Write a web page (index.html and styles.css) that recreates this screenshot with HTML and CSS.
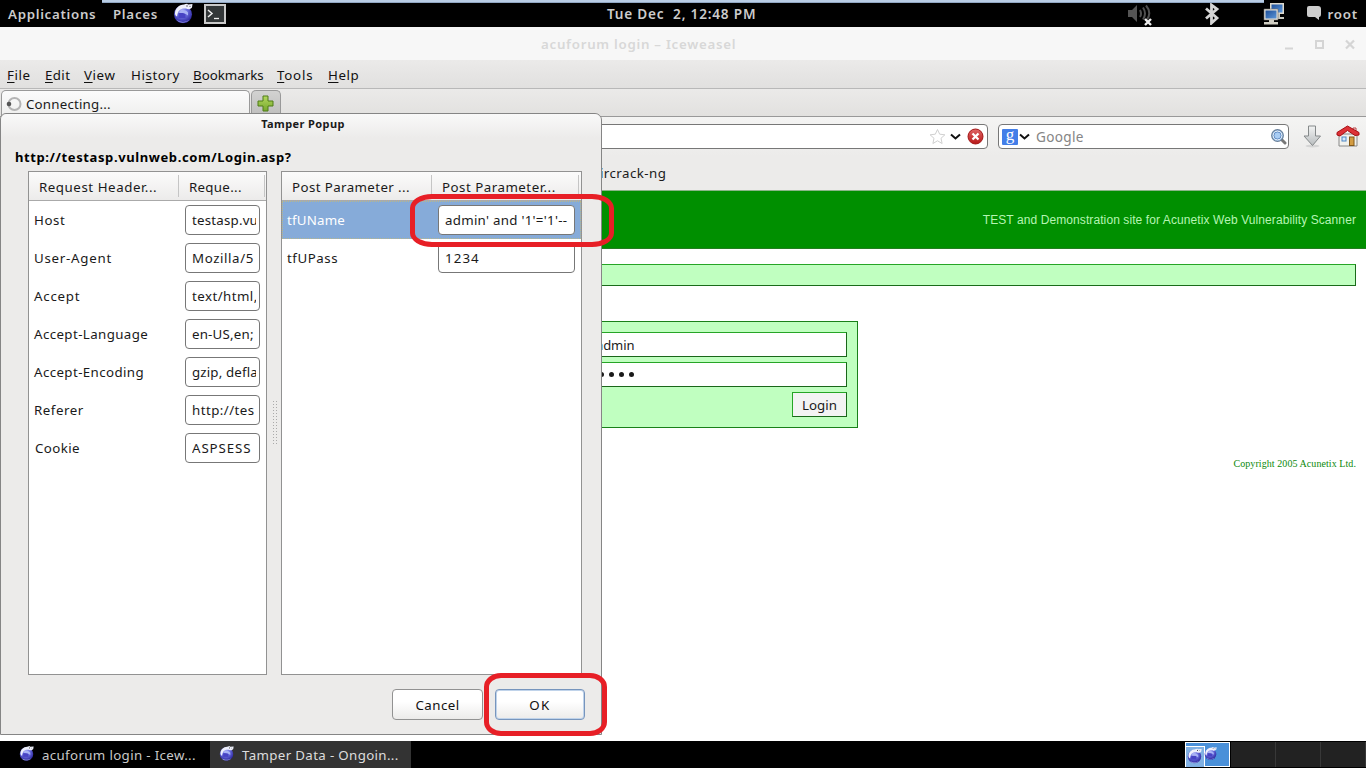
FILE: index.html
```html
<!DOCTYPE html>
<html lang="en">
<head>
<meta charset="utf-8">
<title>acuforum login - Iceweasel</title>
<link rel="stylesheet" href="styles.css">
</head>
<body>
<svg class="defs" width="0" height="0">
  <defs>
    <radialGradient id="globe" cx=".45" cy=".35" r=".65"><stop offset="0" stop-color="#c3cbfa"/><stop offset=".4" stop-color="#6f74e4"/><stop offset="1" stop-color="#2a239c"/></radialGradient>
    <linearGradient id="plus" x2="0" y2="1"><stop offset="0" stop-color="#b4d860"/><stop offset="1" stop-color="#75a72c"/></linearGradient>
    <linearGradient id="screen" x2="1" y2="1"><stop offset="0" stop-color="#1e4f99"/><stop offset="1" stop-color="#5c96d8"/></linearGradient>
    <linearGradient id="stop" x2="0" y2="1"><stop offset="0" stop-color="#e06666"/><stop offset="1" stop-color="#b81818"/></linearGradient>
    <linearGradient id="arrow" x2="0" y2="1"><stop offset="0" stop-color="#f2f3f3"/><stop offset="1" stop-color="#b9bdbf"/></linearGradient>
    <symbol id="weasel" viewBox="0 0 20 20">
      <circle cx="10" cy="10.800" r="9" fill="url(#globe)"/>
      <path d="M4 16.500c3 2.500 9 2.500 12 0-1.500 3-10.500 3.500-12 0Z" fill="#b9c3f2"/>
      <path d="M5.500 9.500h7v5h-7Z" fill="#4743c4"/>
      <path d="M6 9c2-3 7-3 9 0v3c-2-2-6-3-9-3Z" fill="#a8b2f4"/>
      <path d="M2 10C2 5 6 1 11 1l3-1 1 1 4.500-.5-.5 3.500c-1.500 2-4 2.300-6 1C8 4.500 5 6 4 13c-1-.500-2-1.500-2-3Z" fill="#eef0fb"/>
      <circle cx="14" cy="2.500" r=".7" fill="#444"/><circle cx="17" cy="2.800" r=".6" fill="#555"/>
    </symbol>
  </defs>
</svg>
<div class="desktop">
  <header class="panel">
    <span class="p-apps">Applications</span>
    <span class="p-places">Places</span>
    <svg class="p-globe" width="20" height="21" viewBox="0 0 20 20"><use href="#weasel"/></svg>
    <svg class="p-term" width="22" height="20"><rect x="1" y="1" width="20" height="18" fill="#333738" stroke="#c9c9c9" stroke-width="2"/><path d="M4 6l4 3.500L4 13" fill="none" stroke="#eee" stroke-width="1.500"/><path d="M10 14.500h5" stroke="#eee" stroke-width="1.300"/></svg>
    <span class="p-clock">Tue Dec&nbsp; 2, 12:48 PM</span>
    <div class="tray">
      <svg width="26" height="24"><path d="M1 8h4l5-5v17l-5-5H1Z" fill="#555"/><path d="M13 8q2 4 0 7M16 5.500q4 6 0 12M19 3.500q6 7 1 14" fill="none" stroke="#505050" stroke-width="2"/><path d="M18 17l6 6m0-6l-6 6" stroke="#eee" stroke-width="2.400"/></svg>
      <svg width="16" height="22"><path d="M2 5.500l11 9.500-5.500 5V2L13 6 2 15.500" fill="none" stroke="#d5d5d5" stroke-width="2.800"/></svg>
      <svg width="23" height="24"><path d="M7 1h14v11H7Z" fill="#ddd9cd"/><path d="M8.500 2.500h11v8h-11Z" fill="url(#screen)"/><path d="M12 12h5v3h4v2H10" fill="#c9c9bf"/><path d="M1 7h14v11H1Z" fill="#e5e2d8" stroke="#666" stroke-width=".6"/><path d="M2.500 8.500h11v8h-11Z" fill="url(#screen)"/><path d="M6 18h5v2h4v2.500H1V20h5Z" fill="#d0cec3"/></svg>
      <svg width="16" height="16"><path d="M3 1h9q3 0 3 3v5q0 3-2 3v3l-4-3H3q-2 0-2-2V3q0-2 2-2Z" fill="#ccc"/></svg>
      <span>root</span>
    </div>
    <i class="strip"></i>
  </header>

  <div class="titlebar"><span>acuforum login – Iceweasel</span>
    <svg width="76" height="16"><path d="M1 12.500h8" stroke="#d5d5d5" stroke-width="2"/><rect x="32" y="5" width="7" height="7" fill="none" stroke="#d5d5d5" stroke-width="2"/><path d="M62 4.500l8 8m0-8l-8 8" stroke="#d5d5d5" stroke-width="2.300"/></svg>
  </div>

  <nav class="menubar">
    <span class="m1"><u>F</u>ile</span><span class="m2"><u>E</u>dit</span><span class="m3"><u>V</u>iew</span><span class="m4">Hi<u>s</u>tory</span><span class="m5"><u>B</u>ookmarks</span><span class="m6"><u>T</u>ools</span><span class="m7"><u>H</u>elp</span>
  </nav>

  <div class="tabbar">
    <div class="tab"><svg width="16" height="16"><circle cx="8.500" cy="8" r="6" fill="none" stroke="#b4b4b4" stroke-width="2"/><circle cx="3" cy="8" r="2.300" fill="#555"/></svg><span>Connecting...</span></div>
    <div class="newtab"><svg width="17" height="17"><path d="M6 1h5v5h5v5h-5v5H6v-5H1V6h5Z" fill="url(#plus)" stroke="#4e7d16"/></svg></div>
  </div>

  <div class="navbar">
    <div class="urlbar">
      <svg width="17" height="17"><path d="M8.500 1.500l2.200 4.700 5.200.6-3.900 3.500 1.100 5.200-4.600-2.700-4.600 2.700 1.100-5.200-3.900-3.500 5.200-.6Z" fill="#fff" stroke="#d0d0d0"/></svg>
      <svg class="chev" width="11" height="8"><path d="M1 1.500l4.500 4 4.500-4" fill="none" stroke="#111" stroke-width="2"/></svg>
      <svg width="17" height="17"><circle cx="8.500" cy="8.500" r="7.500" fill="url(#stop)" stroke="#a31616"/><path d="M5.500 5.500l6 6m0-6l-6 6" stroke="#fff" stroke-width="2.300"/></svg>
    </div>
    <div class="search">
      <span class="g">g</span>
      <svg width="11" height="8"><path d="M1 1.500l4.500 4 4.500-4" fill="none" stroke="#111" stroke-width="2"/></svg>
      <span class="ph">Google</span>
      <svg width="17" height="17"><path d="M11 11l4 4" stroke="#777" stroke-width="3" stroke-linecap="round"/><circle cx="7.500" cy="7.500" r="5.800" fill="#a9cdf2" stroke="#687f99" stroke-width="1.200"/><circle cx="7.500" cy="7.500" r="4.200" fill="#a9cdf4" stroke="#fff" stroke-width="1"/><circle cx="7.500" cy="7.500" r="3.600" fill="none" stroke="#4b7ab8" stroke-width=".8"/></svg>
    </div>
    <svg class="down" width="19" height="23"><ellipse cx="9.500" cy="21" rx="7" ry="1.500" fill="#d5d5d5"/><path d="M5.500 1h7v10H17.500L9.500 20.500 1 11h4.500Z" fill="url(#arrow)" stroke="#85898a"/></svg>
    <svg class="home" width="24" height="23"><path d="M3 9h18v12H3Z" fill="#f1f1ed" stroke="#888"/><path d="M17 3h3v5h-3Z" fill="#eee" stroke="#b44"/><path d="M1 10V7.500L11.500 1 23 7.500V10L19 10.500 11.500 5.500 4 11Z" fill="#dd3237" stroke="#a80f14"/><rect x="6" y="12" width="4" height="4" fill="#d6e9fb" stroke="#4e87c4"/><rect x="13.500" y="12" width="4.500" height="8.500" fill="#d39c42" stroke="#80581b"/></svg>
  </div>
  <div class="bookmarks"><span>Aircrack-ng</span></div>

  <main class="site">
    <div class="banner">TEST and Demonstration site for Acunetix Web Vulnerability Scanner</div>
    <div class="sitemenu"></div>
    <div class="login">
      <div class="in">admin</div>
      <div class="in pw"><i></i><i></i><i></i><i></i></div>
      <div class="btn">Login</div>
    </div>
    <div class="copy">Copyright 2005 Acunetix Ltd.</div>
  </main>

  <footer class="taskbar">
    <div class="task"><svg width="15" height="15" viewBox="0 0 20 20"><use href="#weasel"/></svg><span>acuforum login - Icew...</span></div>
    <div class="task active"><svg width="15" height="15" viewBox="0 0 20 20"><use href="#weasel"/></svg><span>Tamper Data - Ongoin...</span></div>
    <div class="pager">
      <div class="ws on"><div class="mini"><svg width="15" height="16" viewBox="0 0 20 20"><use href="#weasel"/></svg></div><svg class="second" width="13" height="15" viewBox="0 0 20 20"><use href="#weasel"/></svg></div>
      <div class="ws"></div><div class="ws"></div><div class="ws"></div>
    </div>
  </footer>

  <section class="popup">
    <div class="ptitle">Tamper Popup</div>
    <div class="purl">http://testasp.vulnweb.com/Login.asp?</div>
    <div class="grids">
      <div class="grid left">
        <div class="head"><span class="h1">Request Header...</span><span class="h2">Reque...</span></div>
        <div class="row"><span class="t1">Host</span><div class="field"><b class="f1">testasp.vu</b></div></div>
        <div class="row"><span class="t2">User-Agent</span><div class="field"><b class="f2">Mozilla/5</b></div></div>
        <div class="row"><span class="t3">Accept</span><div class="field"><b class="f3">text/html,</b></div></div>
        <div class="row"><span class="t4">Accept-Language</span><div class="field"><b class="f4">en-US,en;</b></div></div>
        <div class="row"><span class="t5">Accept-Encoding</span><div class="field"><b class="f5">gzip, defla</b></div></div>
        <div class="row"><span class="t6">Referer</span><div class="field"><b class="f6">http://tes</b></div></div>
        <div class="row"><span class="t7">Cookie</span><div class="field"><b class="f7">ASPSESS</b></div></div>
      </div>
      <div class="splitter"><i></i></div>
      <div class="grid right">
        <div class="head"><span class="h3">Post Parameter ...</span><span class="h4">Post Parameter...</span></div>
        <div class="row sel"><span class="t8">tfUName</span><div class="field"><b class="inj">admin' and '1'='1'--</b></div></div>
        <div class="row"><span class="t9">tfUPass</span><div class="field"><b class="num">1234</b></div></div>
      </div>
    </div>
    <div class="actions"><div class="button">Cancel</div><div class="button ok">OK</div></div>
  </section>
  <div class="mark mark-field"></div>
  <div class="mark mark-ok"></div>
</div>
</body>
</html>
```
FILE: styles.css
```css
* { box-sizing: border-box; }
body { margin: 0; font: 13.3px/18px "Noto Sans", "Open Sans", sans-serif; color: #1a1a1a; }
svg { display: block; flex: none; }
.defs { position: absolute; }
.desktop { position: relative; width: 1366px; height: 768px; overflow: hidden; display: flex; flex-direction: column; background: #fff; white-space: nowrap; }

.panel { position: relative; height: 27px; flex: none; background: #000; color: #ccc; font-weight: 600; font-size: 13.3px; display: flex; align-items: center; padding: 1px 8px 0; }
.strip { position: absolute; left: 102px; top: 0; width: 1162px; height: 3px; background: #b9cde5; border-bottom: 1px solid #91a7c3; }
.p-apps { width: 105px; letter-spacing: .7px; }
.p-places { width: 60px; letter-spacing: .75px; }
.p-globe { margin-top: -2px; }
.p-term { margin: -1px 0 0 11px; }
.p-clock { margin-left: 381px; width: 521px; font-size: 13.6px; letter-spacing: .8px; }
.tray { display: flex; align-items: center; }
.tray svg:nth-child(1) { margin-top: -1px; }
.tray svg:nth-child(2) { margin: -1px 0 0 51px; }
.tray svg:nth-child(3) { margin: -1px 0 0 43px; }
.tray svg:nth-child(4) { margin: -2px 0 0 20px; }
.tray span { margin-left: 5px; letter-spacing: .8px; }

.titlebar { height: 33px; flex: none; background: #f7f7f7; color: #d8d8d8; font-weight: 600; letter-spacing: .72px; display: flex; align-items: center; padding: 1px 6px 0 541px; justify-content: space-between; }
.menubar { height: 29px; flex: none; background: linear-gradient(#ebeae9, #e1e0df); border-bottom: 1px solid #b8b8b8; display: flex; align-items: center; padding: 2px 0 0 7px; color: #111; letter-spacing: .6px; }
.menubar u { text-underline-offset: 2px; }
.m1 { width: 38px; } .m2 { width: 39px; letter-spacing: .4px; } .m3 { width: 47px; } .m4 { width: 62px; } .m5 { width: 84px; letter-spacing: 0; } .m6 { width: 51px; letter-spacing: .8px; }
.tabbar { height: 28px; flex: none; background: linear-gradient(#ebeae9, #e2e1df); border-bottom: 1px solid #999; display: flex; padding: 1px 0 0 1px; gap: 1px; }
.tab { width: 249px; border: 1px solid #999; border-bottom: 0; border-radius: 5px 5px 0 0; background: linear-gradient(#fbfbfb, #efefee); display: flex; align-items: center; gap: 4px; padding-left: 4px; letter-spacing: .2px; }
.newtab { width: 30px; border: 1px solid #999; border-bottom: 0; border-radius: 5px 5px 0 0; background: linear-gradient(#d2d2d1, #bebebd); display: flex; padding: 4px 0 0 5px; }
.navbar { height: 39px; flex: none; background: linear-gradient(#f4f4f3, #ecebea); display: flex; padding-top: 7px; }
.urlbar, .search { height: 25px; background: #fff; border: 1px solid #777; border-radius: 4px; display: flex; align-items: center; }
.urlbar { width: 688px; margin-left: 300px; justify-content: flex-end; padding-right: 3px; }
.chev { margin: 0 6px 0 4px; }
.search { width: 291px; margin-left: 10px; padding: 0 1px 0 3px; }
.g { width: 16px; height: 16px; border-radius: 1px; background: #437ee8; color: #fff; font: 17px/12px "Liberation Serif", serif; text-align: center; margin-right: 1px; }
.ph { margin-left: 6px; color: #858585; font-size: 13.6px; letter-spacing: .3px; flex: 1; }
.down { margin: 1px 0 0 14px; }
.home { margin: 1px 0 0 14px; }
.bookmarks { height: 34px; flex: none; background: #ecebea; padding: 8px 0 0 591px; letter-spacing: .45px; }

.site { height: 551px; flex: none; background: #fff; padding-right: 10px; }
.banner { height: 59px; margin-right: -10px; background: #008f00; border-top: 1px solid #8ab588; border-bottom: 1px solid #237d20; color: #b5f5b3; font: 12px/58px "Liberation Sans", Arial, sans-serif; text-align: right; padding-right: 10px; letter-spacing: .09px; }
.sitemenu { height: 22px; margin: 15px 0 0 10px; background: #c0ffc0; border: 1px solid #1a6b1a; border-top-color: #26a526; }
.login { width: 358px; height: 107px; margin: 35px 0 0 500px; background: #c0ffc0; border: 1px solid #198019; padding: 10px; display: flex; flex-direction: column; align-items: flex-end; gap: 5px; }
.in, .btn { height: 25px; border: 1px solid #1a661a; border-top-color: #26a526; background: #fff; display: flex; align-items: center; }
.in { width: 320px; padding-left: 68px; font-size: 13px; letter-spacing: -.1px; }
.pw { gap: 5px; padding-left: 71px; }
.pw i { width: 5px; height: 5px; border-radius: 50%; background: #1a1a1a; }
.btn { width: 55px; background: #f3f3f3; justify-content: center; border-left-color: #26a526; }
.copy { margin-top: 30px; text-align: right; color: #0b8a0b; font: 10px/12px "Liberation Serif", serif; letter-spacing: .07px; }

.taskbar { height: 27px; flex: none; background: #000; display: flex; color: #c9c9c9; letter-spacing: .35px; }
.task { display: flex; align-items: center; width: 210px; padding: 1px 0 0 19px; gap: 8px; }
.task svg { margin-top: -3px; }
.active { width: 201px; padding-left: 9px; background: #333; color: #ddd; }
.pager { margin-left: auto; display: flex; padding: 1px 0; }
.ws { width: 45px; height: 25px; border-right: 1px solid #383838; background: #222; }
.on { border: 1px solid #fff; background: #4a90d9; display: flex; margin-right: 1px; width: 45px; }
.mini { width: 19px; height: 21px; margin-top: 3px; border: 1px solid #fff; border-left: 0; border-bottom: 0; background: #80b0e3; padding: 1px 0 0 1px; }
.second { margin: 3px 0 0 -1px; }

.popup { position: absolute; left: 0; top: 113px; width: 602px; height: 622px; background: #ecebea; border: 1px solid #858585; border-radius: 6px 7px 0 0; display: flex; flex-direction: column; }
.ptitle { height: 24px; border-radius: 6px 7px 0 0; background: linear-gradient(#f9f9f9, #ecebea); text-align: center; font-size: 11px; line-height: 20px; font-weight: 700; padding-left: 4px; letter-spacing: .4px; }
.purl { font-weight: 700; font-size: 13px; color: #000; margin-left: 14px; height: 33px; line-height: 39px; letter-spacing: .6px; }
.grids { display: flex; margin-left: 27px; height: 504px; }
.grid { border: 1px solid #929292; background: #fff; letter-spacing: .55px; }
.left { width: 239px; }
.right { width: 301px; }
.splitter { width: 14px; display: flex; align-items: center; justify-content: center; }
.splitter i { width: 5px; height: 46px; background: radial-gradient(circle, #aaa 35%, transparent 40%) 0 0 / 3px 3px; }
.head { display: flex; height: 29px; background: linear-gradient(#fbfbfb, #ecebea); border-bottom: 1px solid #aaa; align-items: center; padding: 3px 0; }
.head span { height: 22px; line-height: 24px; border-right: 1px solid #c5c5c5; padding-left: 10px; }
.h1 { width: 150px; }
.h2 { width: 86px; letter-spacing: .3px; }
.h3 { width: 150px; letter-spacing: .4px; }
.h4 { width: 147px; letter-spacing: .5px; }
.row { height: 38px; display: flex; align-items: center; justify-content: space-between; padding: 0 6px 0 5px; }
.t2, .t3 { letter-spacing: .75px; }
.t4, .t5 { letter-spacing: .4px; }
.t7 { letter-spacing: .4px; padding-left: 1px; }
.t8 { letter-spacing: .2px; }
.field { width: 75px; height: 30px; border: 1px solid #777; border-radius: 4px; background: #fff; padding: 0 3px 0 6px; display: flex; align-items: center; }
.field b { font-weight: 400; overflow: hidden; width: 100%; }
.f1 { letter-spacing: .2px; }
.f2 { letter-spacing: .6px; }
.f3 { letter-spacing: .45px; }
.f4 { letter-spacing: .2px; }
.f5 { letter-spacing: .15px; }
.f6 { letter-spacing: .45px; }
.f7 { letter-spacing: .9px; }
.inj { letter-spacing: .28px; }
.num { letter-spacing: 1.100px; }
.right .field { width: 137px; }
.sel { background: #86abd9; color: #fff; border: 1px dotted #b9b78a; padding: 0 5px 0 4px; }
.sel .field { color: #1a1a1a; }
.actions { display: flex; justify-content: flex-end; gap: 12px; padding: 14px 16px 0 0; }
.button { width: 91px; height: 31px; border: 1px solid #929292; border-radius: 4px; background: linear-gradient(#fff 40%, #ecebea); text-align: center; line-height: 31px; color: #111; letter-spacing: .45px; }
.ok { width: 90px; border-color: #7795bd; box-shadow: inset 0 0 0 1px #c0d3ea; letter-spacing: 1.400px; }
.mark { position: absolute; border: 5px solid #e71f26; }
.mark-field { left: 410px; top: 194px; width: 204px; height: 53px; border-radius: 22px / 14px; }
.mark-ok { left: 484px; top: 673px; width: 123px; height: 63px; border-radius: 17px / 14px; }
```
